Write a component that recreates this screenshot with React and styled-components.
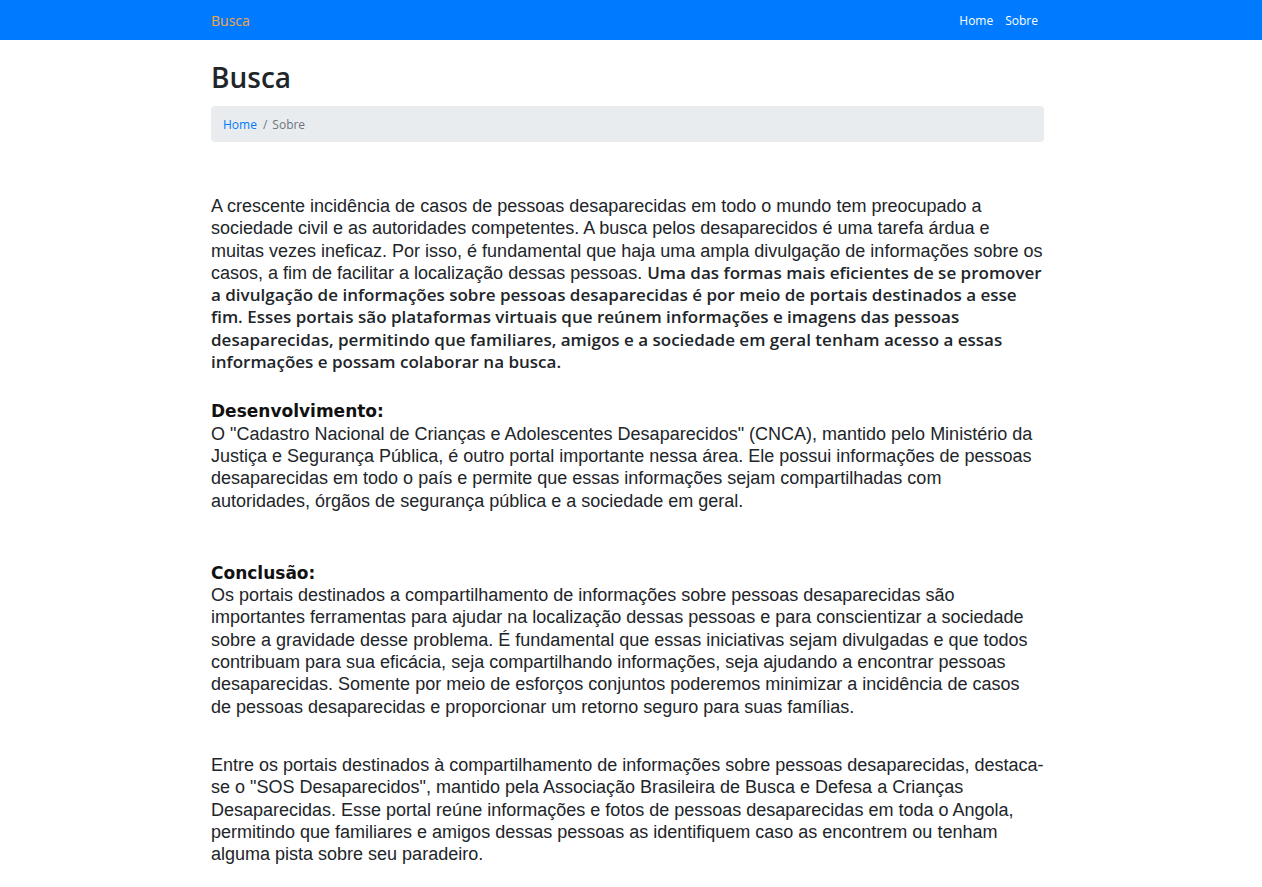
import styled, { createGlobalStyle } from 'styled-components';

const GlobalStyle = createGlobalStyle`
  * {
    box-sizing: border-box;
  }
  body {
    margin: 0;
    background: #fff;
    color: #212529;
    font-family: "Open Sans", "Noto Sans", sans-serif;
  }
`;

const crumbs = [
  { label: 'Home', active: false },
  { label: 'Sobre', active: true },
];

function App() {
  return (
    <>
      <GlobalStyle />
      <Navbar>
        <NavInner>
          <Brand href="#">Busca</Brand>
          <NavLinks>
            <NavLink href="#">Home</NavLink>
            <NavLink href="#">Sobre</NavLink>
          </NavLinks>
        </NavInner>
      </Navbar>

      <Container>
        <Title>Busca</Title>
        <Breadcrumb>
          {crumbs.map((c, i) => (
            <Crumb key={c.label} $active={c.active}>
              {i > 0 && <Sep>/</Sep>}
              {c.active ? c.label : <a href="#">{c.label}</a>}
            </Crumb>
          ))}
        </Breadcrumb>

        <Article>
          <Text>
            A crescente incidência de casos de pessoas desaparecidas em todo o mundo tem preocupado a
            sociedade civil e as autoridades competentes. A busca pelos desaparecidos é uma tarefa árdua e
            muitas vezes ineficaz. Por isso, é fundamental que haja uma ampla divulgação de informações sobre os
            casos, a fim de facilitar a localização dessas pessoas.{' '}
            <Strong>
              Uma das formas mais eficientes de se promover a divulgação de informações sobre pessoas
              desaparecidas é por meio de portais destinados a esse fim. Esses portais são plataformas virtuais
              que reúnem informações e imagens das pessoas desaparecidas, permitindo que familiares, amigos e a
              sociedade em geral tenham acesso a essas informações e possam colaborar na busca.
            </Strong>
          </Text>

          <Section $gap={27}>
            <Heading>Desenvolvimento:</Heading>
            <Text>
              O &quot;Cadastro Nacional de Crianças e Adolescentes Desaparecidos&quot; (CNCA), mantido pelo Ministério da
              Justiça e Segurança Pública, é outro portal importante nessa área. Ele possui informações de pessoas
              desaparecidas em todo o país e permite que essas informações sejam compartilhadas com
              autoridades, órgãos de segurança pública e a sociedade em geral.
            </Text>
          </Section>

          <Section $gap={50}>
            <Heading>Conclusão:</Heading>
            <Text>
              Os portais destinados a compartilhamento de informações sobre pessoas desaparecidas são
              importantes ferramentas para ajudar na localização dessas pessoas e para conscientizar a sociedade
              sobre a gravidade desse problema. É fundamental que essas iniciativas sejam divulgadas e que todos
              contribuam para sua eficácia, seja compartilhando informações, seja ajudando a encontrar pessoas
              desaparecidas. Somente por meio de esforços conjuntos poderemos minimizar a incidência de casos
              de pessoas desaparecidas e proporcionar um retorno seguro para suas famílias.
            </Text>
          </Section>

          <Section $gap={36}>
            <Text>
              Entre os portais destinados à compartilhamento de informações sobre pessoas desaparecidas, destaca-se
              o &quot;SOS Desaparecidos&quot;, mantido pela Associação Brasileira de Busca e Defesa a Crianças
              Desaparecidas. Esse portal reúne informações e fotos de pessoas desaparecidas em toda o Angola,
              permitindo que familiares e amigos dessas pessoas as identifiquem caso as encontrem ou tenham
              alguma pista sobre seu paradeiro.
            </Text>
          </Section>
        </Article>
      </Container>
    </>
  );
}

const Navbar = styled.nav`
  background: #007bff;
  height: 40px;
`;

const NavInner = styled.div`
  width: 833px;
  height: 100%;
  margin-left: calc(50% - 420px);
  display: flex;
  align-items: center;
  justify-content: space-between;
  padding-right: 6px;
`;

const Brand = styled.a`
  color: #f6a545;
  font-size: 14px;
  text-decoration: none;
`;

const NavLinks = styled.div`
  display: flex;
  gap: 12px;
`;

const NavLink = styled.a`
  color: #fff;
  font-size: 12px;
  text-decoration: none;
`;

const Container = styled.main`
  width: 833px;
  margin-left: calc(50% - 420px);
  padding-top: 20px;
  padding-bottom: 20px;
`;

const Title = styled.h1`
  margin: 0 0 12px;
  font-size: 28px;
  font-weight: 600;
  line-height: 34px;
  color: #212529;
`;

const Breadcrumb = styled.ol`
  list-style: none;
  margin: 0;
  height: 36px;
  padding: 1px 12px 0;
  display: flex;
  align-items: center;
  background: #e9ecef;
  border-radius: 4px;
  font-size: 12px;
`;

const Crumb = styled.li`
  color: ${(p) => (p.$active ? '#6c757d' : '#007bff')};
  a {
    color: #007bff;
    text-decoration: none;
  }
`;

const Sep = styled.span`
  color: #6c757d;
  padding: 0 5px 0 6px;
`;

const Article = styled.article`
  padding-top: 53px;
`;

const Section = styled.section`
  margin-top: ${(p) => p.$gap}px;
`;

const Text = styled.p`
  margin: 0;
  font-family: "Liberation Sans", Arial, sans-serif;
  font-size: 18px;
  line-height: 22.3px;
  color: #212529;
`;

const Strong = styled.strong`
  font-family: "Open Sans", "Noto Sans", sans-serif;
  font-weight: 600;
  font-size: 17px;
`;

const Heading = styled.h3`
  margin: 0;
  font-family: "DejaVu Sans", sans-serif;
  font-weight: 700;
  font-size: 17px;
  line-height: 22.3px;
  color: #111;
`;

export default App;
